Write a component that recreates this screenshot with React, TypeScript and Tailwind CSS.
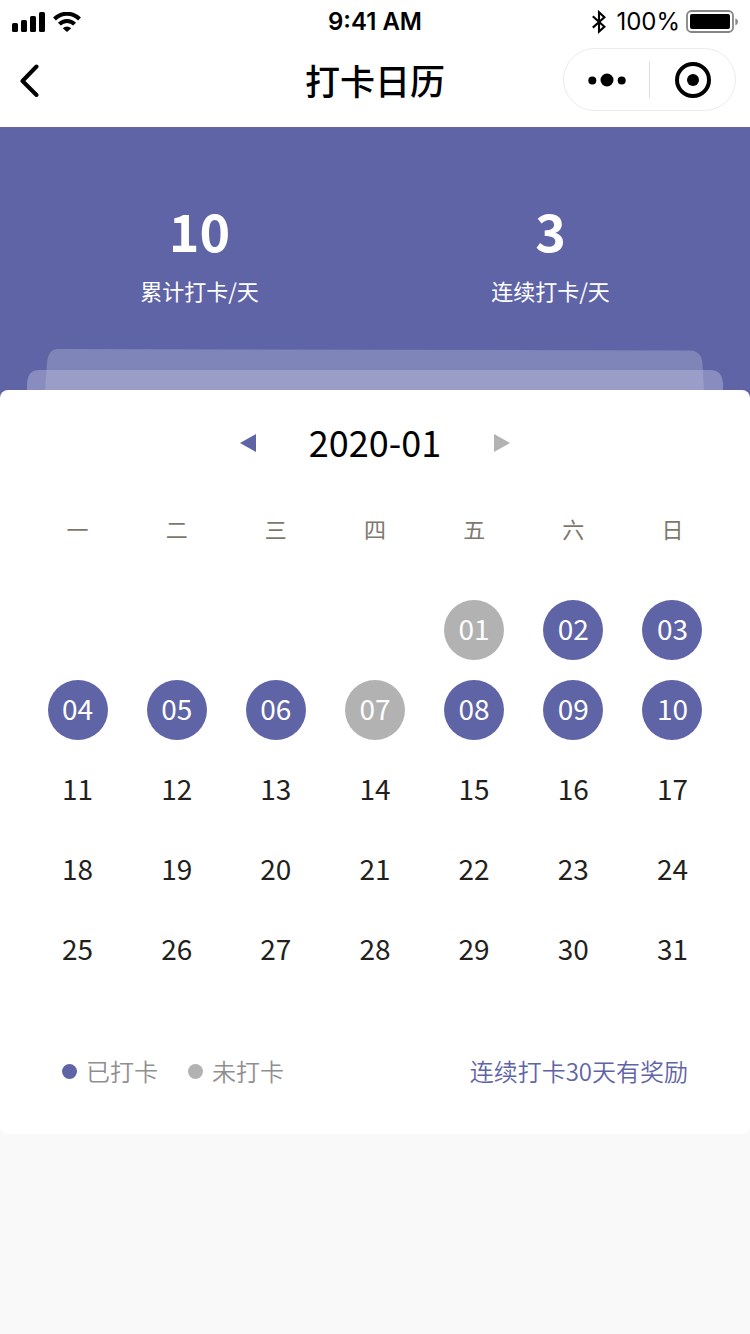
import React from "react";

type DayState = "checked" | "missed" | "plain";

const WEEKDAYS = ["一", "二", "三", "四", "五", "六", "日"];
const FIRST_DAY_OFFSET = 4;
const DAYS_IN_MONTH = 31;
const MISSED_DAYS = [1, 7];
const LAST_RECORDED_DAY = 10;

const DAY_STYLES: Record<DayState, string> = {
  checked: "bg-[#5f64a6] text-white",
  missed: "bg-[#b2b2b2] text-white",
  plain: "text-[#231f1c]",
};

function dayState(day: number): DayState {
  if (MISSED_DAYS.includes(day)) return "missed";
  return day <= LAST_RECORDED_DAY ? "checked" : "plain";
}

function buildWeeks(): (number | null)[][] {
  const cells: (number | null)[] = [
    ...Array<null>(FIRST_DAY_OFFSET).fill(null),
    ...Array.from({ length: DAYS_IN_MONTH }, (_, i) => i + 1),
  ];
  const weeks: (number | null)[][] = [];
  for (let i = 0; i < cells.length; i += 7) weeks.push(cells.slice(i, i + 7));
  return weeks;
}

function StatusBar() {
  return (
    <div className="grid h-11 grid-cols-3 items-center px-3 font-['Inter',sans-serif] text-[24px] leading-7">
      <div className="flex items-center gap-2">
        <svg width="33" height="20" viewBox="0 0 33 20" aria-hidden="true">
          <rect x="0" y="11" width="6" height="9" rx="1.6" />
          <rect x="9" y="8" width="6" height="12" rx="1.6" />
          <rect x="18" y="4" width="6" height="16" rx="1.6" />
          <rect x="27" y="0" width="6" height="20" rx="1.6" />
        </svg>
        <svg width="28" height="20" viewBox="0 0 28 20" aria-hidden="true">
          <path d="M1.5 7A17.4 17.4 0 0 1 26.5 7" fill="none" stroke="#000" strokeWidth="4" />
          <path d="M6.4 12.2A10.6 10.6 0 0 1 21.600 12.2" fill="none" stroke="#000" strokeWidth="4" />
          <path d="M9.8 16.2a6 6 0 0 1 8.4 0L14.6 19.6q-.6.5-1.2 0Z" />
        </svg>
      </div>
      <div className="text-center font-semibold">9:41 AM</div>
      <div className="flex items-center justify-end">
        <svg width="14" height="24" viewBox="0 0 14 24" fill="none" stroke="#000" strokeWidth="2.1" aria-hidden="true">
          <path d="M0.8 6.2 12.4 16.8 7 21.6V2.200L12.4 7.2 0.8 17.6" />
        </svg>
        <span className="ml-2.5">100%</span>
        <svg className="ml-1.5" width="52" height="24" viewBox="0 0 52 24" aria-hidden="true">
          <rect x="1" y="1" width="46" height="21" rx="4.5" fill="none" stroke="#858585" strokeWidth="1.8" />
          <rect x="4" y="4" width="40" height="15" rx="2" />
          <path d="M49.400 8.2q2.6 1 2.6 3.6T49.400 15.4Z" fill="#858585" />
        </svg>
      </div>
    </div>
  );
}

function NavBar() {
  return (
    <div className="grid grid-cols-[1fr_auto_1fr] items-center px-3.5 pt-1 pb-4">
      <button type="button" aria-label="返回" className="flex h-12 w-9 items-center pl-1">
        <svg width="24" height="34" viewBox="0 0 24 34" fill="none" stroke="#000" strokeWidth="4" strokeLinecap="round" strokeLinejoin="round" aria-hidden="true">
          <path d="M18.500 3.500 4.500 18 18.500 32" />
        </svg>
      </button>
      <h1 className="text-[35px] leading-[52px] font-medium">打卡日历</h1>
      <div className="flex h-[63px] w-[173px] items-center justify-self-end rounded-full border border-[#ebebeb]">
        <button type="button" aria-label="更多" className="flex h-full flex-1 items-center justify-center">
          <svg width="38" height="14" viewBox="0 0 38 14" aria-hidden="true">
            <circle cx="4.3" cy="7.5" r="4" />
            <circle cx="19" cy="7" r="6.5" />
            <circle cx="33.7" cy="7.5" r="4" />
          </svg>
        </button>
        <span className="h-[37px] w-px bg-[#dedede]" />
        <button type="button" aria-label="关闭" className="flex h-full flex-1 items-center justify-center">
          <svg width="36" height="36" viewBox="0 0 36 36" aria-hidden="true">
            <circle cx="18" cy="18" r="16" fill="none" stroke="#000" strokeWidth="4" />
            <circle cx="18" cy="18" r="6" />
          </svg>
        </button>
      </div>
    </div>
  );
}

function Stat({ value, label }: { value: number; label: string }) {
  return (
    <div className="flex flex-col items-center gap-2">
      <dd className="order-1 text-[52px] leading-[72px] font-bold">{value}</dd>
      <dt className="order-2 text-[22px] leading-8">{label}</dt>
    </div>
  );
}

function Hero() {
  return (
    <section className="bg-[#5f64a6] pt-[67px] pb-2 text-white">
      <dl className="grid grid-cols-2 px-6">
        <Stat value={10} label="累计打卡/天" />
        <Stat value={3} label="连续打卡/天" />
      </dl>
      <svg className="mt-[43px] block h-[41px] w-full" viewBox="0 0 750 41" preserveAspectRatio="none" aria-hidden="true">
        <path d="M45 41 47 14Q48 0 58 0L690 1.5Q702 2 702.500 15L704 41Z" fill="#9fa4cb" fillOpacity="0.5" />
        <path d="M27 41V34Q28 21 39 21H710Q722 21 723 34V41Z" fill="#b5b7d9" fillOpacity="0.48" />
      </svg>
    </section>
  );
}

function MonthSwitcher() {
  return (
    <div className="flex h-[106px] items-center justify-center gap-[41px]">
      <button type="button" aria-label="上个月" className="flex h-10 w-10 items-center justify-center">
        <svg width="16" height="18" viewBox="0 0 16 18" fill="#5f64a6" aria-hidden="true">
          <path d="M16 0V18L0 9Z" />
        </svg>
      </button>
      <h2 className="pb-1 text-[36px] leading-[52px]">2020-01</h2>
      <button type="button" aria-label="下个月" className="flex h-10 w-10 items-center justify-center">
        <svg width="16" height="18" viewBox="0 0 16 18" fill="#b2b2b2" aria-hidden="true">
          <path d="M0 0V18L16 9Z" />
        </svg>
      </button>
    </div>
  );
}

function Calendar() {
  return (
    <table className="w-full table-fixed border-collapse text-center">
      <thead>
        <tr>
          {WEEKDAYS.map((name) => (
            <th key={name} scope="col" className="p-0 pt-4 pb-[46px] text-[22px] leading-8 font-normal text-[#7d786c]">
              {name}
            </th>
          ))}
        </tr>
      </thead>
      <tbody>
        {buildWeeks().map((week, index) => (
          <tr key={index}>
            {week.map((day, column) => (
              <td key={column} className="h-20 p-0">
                {day !== null && (
                  <span
                    className={`mx-auto flex size-[60px] items-center justify-center rounded-full pb-1 text-[28px] leading-10 ${DAY_STYLES[dayState(day)]}`}
                  >
                    {String(day).padStart(2, "0")}
                  </span>
                )}
              </td>
            ))}
          </tr>
        ))}
      </tbody>
    </table>
  );
}

function Legend() {
  return (
    <div className="mt-[18px] flex h-[126px] items-center justify-between px-[34px] text-[24px] leading-9 font-[350]">
      <ul className="flex gap-[30px] text-[#8f8f8f]">
        <li className="flex items-center gap-[9px]">
          <span className="size-[15px] rounded-full bg-[#5f64a6]" />
          已打卡
        </li>
        <li className="flex items-center gap-[9px]">
          <span className="size-[15px] rounded-full bg-[#b2b2b2]" />
          未打卡
        </li>
      </ul>
      <p className="text-[#5f64a6]">连续打卡30天有奖励</p>
    </div>
  );
}

export default function App() {
  return (
    <div className="min-h-screen bg-[#f9f9f9] font-['Noto_Sans_CJK_SC',sans-serif] text-black">
      <header className="bg-white">
        <StatusBar />
        <NavBar />
      </header>
      <main>
        <Hero />
        <section className="relative -mt-2 rounded-lg bg-white px-7">
          <MonthSwitcher />
          <Calendar />
          <Legend />
        </section>
      </main>
    </div>
  );
}
